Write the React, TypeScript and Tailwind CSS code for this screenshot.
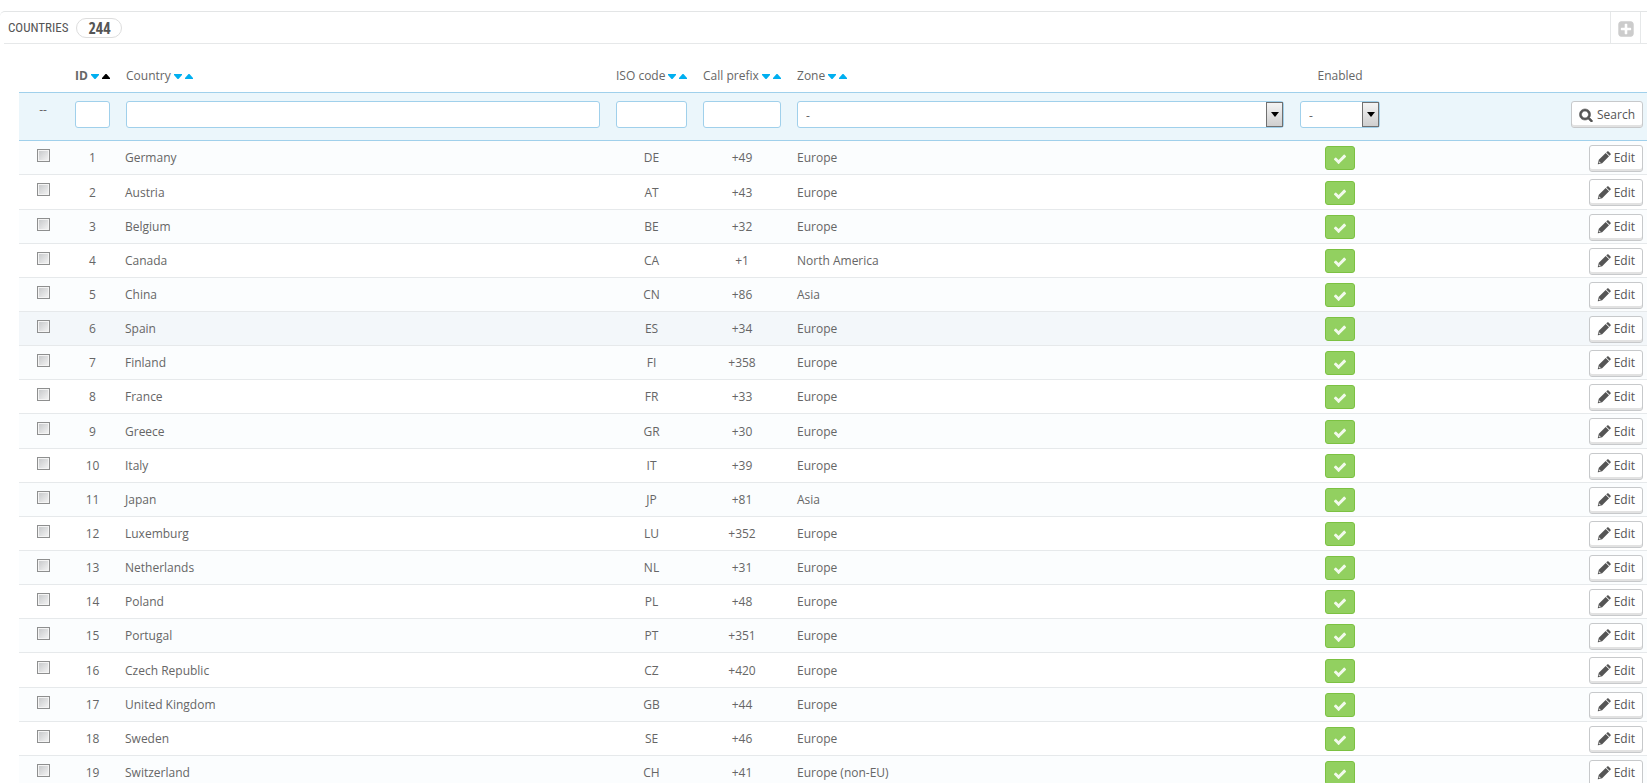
import React from "react";

const PATHS = {
  check:
    "M1671 566q0 40-28 68l-724 724-136 136q-28 28-68 28t-68-28l-136-136-362-362q-28-28-28-68t28-68l136-136q28-28 68-28t68 28l294 295 656-657q28-28 68-28t68 28l136 136q28 28 28 68z",
  pencil:
    "M400 1570l70-70-170-170-70 70v80h90v90h80zM1110 250l430 430-880 880-520 130q-50 10-40-40l130-520zM1760 400q0 55-38 92l-110 110-424-424 110-110q38-38 92-38t92 38l240 240q38 36 38 92z",
  search:
    "M1216 832q0-185-131.5-316.5t-316.5-131.5-316.5 131.5-131.5 316.5 131.5 316.5 316.5 131.5 316.5-131.5 131.5-316.5zm512 832q0 52-38 90t-90 38q-54 0-90-38l-343-342q-179 124-399 124-143 0-273.5-55.5t-225-150-150-225-55.5-273.5 55.5-273.5 150-225 225-150 273.5-55.5 273.5 55.5 225 150 150 225 55.5 273.5q0 220-124 399l343 343q37 37 37 90z",
  plusSquare:
    "M1408 960v-128q0-26-19-45t-45-19h-320v-320q0-26-19-45t-45-19h-128q-26 0-45 19t-19 45v320h-320q-26 0-45 19t-19 45v128q0 26 19 45t45 19h320v320q0 26 19 45t45 19h128q26 0 45-19t19-45v-320h320q26 0 45-19t19-45zm256-544v960q0 119-84.500 203.500t-203.500 84.500h-960q-119 0-203.500-84.500t-84.500-203.500v-960q0-119 84.500-203.500t203.500-84.500h960q119 0 203.500 84.500t84.500 203.500z",
};

function Icon({ name, className }: { name: keyof typeof PATHS; className: string }) {
  return (
    <svg viewBox="0 0 1792 1792" fill="currentColor" fillRule="evenodd" aria-hidden="true" className={className}>
      <path d={PATHS[name]} />
    </svg>
  );
}

type Country = [id: number, name: string, iso: string, prefix: string, zone: string];

const COUNTRIES: Country[] = [
  [1, "Germany", "DE", "+49", "Europe"],
  [2, "Austria", "AT", "+43", "Europe"],
  [3, "Belgium", "BE", "+32", "Europe"],
  [4, "Canada", "CA", "+1", "North America"],
  [5, "China", "CN", "+86", "Asia"],
  [6, "Spain", "ES", "+34", "Europe"],
  [7, "Finland", "FI", "+358", "Europe"],
  [8, "France", "FR", "+33", "Europe"],
  [9, "Greece", "GR", "+30", "Europe"],
  [10, "Italy", "IT", "+39", "Europe"],
  [11, "Japan", "JP", "+81", "Asia"],
  [12, "Luxemburg", "LU", "+352", "Europe"],
  [13, "Netherlands", "NL", "+31", "Europe"],
  [14, "Poland", "PL", "+48", "Europe"],
  [15, "Portugal", "PT", "+351", "Europe"],
  [16, "Czech Republic", "CZ", "+420", "Europe"],
  [17, "United Kingdom", "GB", "+44", "Europe"],
  [18, "Sweden", "SE", "+46", "Europe"],
  [19, "Switzerland", "CH", "+41", "Europe (non-EU)"],
];

function SortHeader({ label, active }: { label: string; active?: boolean }) {
  return (
    <div className={`flex items-center ${active ? "font-bold" : ""}`}>
      <span className="whitespace-nowrap">{label}</span>
      <a href="#desc" aria-label={`Sort ${label} descending`} className="ml-[3px] text-[#00aff0]">
        <svg viewBox="0 0 8 5" fill="currentColor" className="h-[5px] w-2">
          <path d="M0 0h8v1L4.5 5h-1L0 1z" />
        </svg>
      </a>
      <a
        href="#asc"
        aria-label={`Sort ${label} ascending`}
        className={`ml-[3px] ${active ? "text-black" : "text-[#00aff0]"}`}
      >
        <svg viewBox="0 0 8 5" fill="currentColor" className="h-[5px] w-2">
          <path d="M3.5 0h1L8 4v1H0V4z" />
        </svg>
      </a>
    </div>
  );
}

function TextFilter({ label }: { label: string }) {
  return (
    <input
      type="text"
      aria-label={label}
      className="block h-[27px] w-full rounded-[3px] border border-[#a0d0eb] bg-white px-2 outline-none"
    />
  );
}

function SelectFilter({ label }: { label: string }) {
  return (
    <div className="relative">
      <select
        aria-label={label}
        className="block h-[27px] w-full appearance-none rounded-[3px] border border-[#a0d0eb] bg-white pt-0.5 pl-2 outline-none"
      >
        <option>-</option>
      </select>
      <span className="pointer-events-none absolute inset-y-px right-px flex w-[17px] items-center justify-center border border-[#707070] bg-linear-to-b from-[#f4f4f4] to-[#cfcfcf]">
        <svg viewBox="0 0 8 5" fill="#000" className="h-[5px] w-2">
          <path d="M0 0h8L4 5z" />
        </svg>
      </span>
    </div>
  );
}

const BUTTON =
  "inline-flex h-[27px] items-center rounded-[3px] border border-[#c7c9cb] bg-white px-[7px] text-[#555] shadow-[inset_0_-2px_0_#e2e2e2]";

export default function App() {
  return (
    <main className="h-screen overflow-hidden bg-white pt-[11px] font-['Open_Sans','Noto_Sans',sans-serif] text-[12px] text-[#666]">
      <section className="rounded-tl-[5px] border-t border-[#e3e5e6]">
        <header className="ml-1 flex h-8 items-stretch border-b border-[#e6e8e9] font-['Ubuntu_Condensed','Liberation_Sans_Narrow','Roboto_Condensed',sans-serif] text-[#555]">
          <h1 className="flex flex-1 items-center gap-2 pl-1 text-[13px]">
            COUNTRIES
            <span className="flex h-5 w-[46px] items-center justify-center rounded-full border border-[#ddd] font-['Open_Sans_Condensed','Liberation_Sans_Narrow',sans-serif] text-[16px] font-bold">
              244
            </span>
          </h1>
          <button
            type="button"
            aria-label="Add new country"
            className="mr-[6px] flex w-[31px] items-center justify-center border-x border-[#e6e8e9] pt-0.5 text-[#ccc]"
          >
            <Icon name="plusSquare" className="size-[18px]" />
          </button>
        </header>

        <div className="pt-4 pl-[19px]">
          <table className="w-full table-fixed border-separate border-spacing-0">
            <colgroup>
              <col className="w-12" />
              <col className="w-[51px]" />
              <col className="w-[30.1%]" />
              <col className="w-[87px]" />
              <col className="w-[94px]" />
              <col className="w-[30.9%]" />
              <col className="w-24" />
              <col />
            </colgroup>
            <thead>
              <tr className="h-[33px] text-left *:border-b *:border-[#a0d0eb] *:px-2 *:font-normal">
                <td />
                <th scope="col"><SortHeader label="ID" active /></th>
                <th scope="col"><SortHeader label="Country" /></th>
                <th scope="col"><SortHeader label="ISO code" /></th>
                <th scope="col"><SortHeader label="Call prefix" /></th>
                <th scope="col"><SortHeader label="Zone" /></th>
                <th scope="col" className="text-center">Enabled</th>
                <td />
              </tr>
              <tr className="h-12 bg-[#ebf6fb] *:border-b *:border-[#a0d0eb] *:px-2 *:pt-2 *:align-top">
                <td className="text-center">--</td>
                <td><TextFilter label="Filter by ID" /></td>
                <td><TextFilter label="Filter by country" /></td>
                <td><TextFilter label="Filter by ISO code" /></td>
                <td><TextFilter label="Filter by call prefix" /></td>
                <td><SelectFilter label="Filter by zone" /></td>
                <td><SelectFilter label="Filter by enabled" /></td>
                <td>
                  <div className="-mr-1 flex justify-end">
                    <button type="button" className={BUTTON}>
                      <Icon name="search" className="mr-1 size-[14px] stroke-current stroke-[80px]" />
                      Search
                    </button>
                  </div>
                </td>
              </tr>
            </thead>
            <tbody>
              {COUNTRIES.map(([id, name, iso, prefix, zone]) => (
                <tr
                  key={id}
                  className={`h-[34px] nth-[7n+2]:h-[35px] *:border-b *:border-[#e6e9eb] *:px-2 *:pt-px ${
                    id === 6 ? "bg-[#f3f7fa]" : "odd:bg-[#fbfdfe]"
                  }`}
                >
                  <td className="align-top">
                    <input
                      type="checkbox"
                      aria-label={`Select ${name}`}
                      className="mx-auto mt-[7px] block size-[13px] appearance-none border border-[#8e8f8f] bg-linear-to-br from-[#c4c6c8] to-[#f6f6f6] shadow-[inset_0_0_0_1px_#f4f4f4]"
                    />
                  </td>
                  <td className="text-center">{id}</td>
                  <td className="pl-[7px]!">{name}</td>
                  <td className="text-center">{iso}</td>
                  <td className="text-center">{prefix}</td>
                  <td>{zone}</td>
                  <td>
                    <button
                      type="button"
                      aria-label={`${name} enabled`}
                      className="mx-auto flex h-6 w-[30px] items-center justify-center rounded-[3px] border border-[#7cc142] bg-[#92d060] pt-0.5 text-[#f2faec]"
                    >
                      <Icon name="check" className="size-[14px]" />
                    </button>
                  </td>
                  <td>
                    <div className="-mr-1 flex justify-end">
                      <button type="button" className={BUTTON}>
                        <Icon name="pencil" className="mr-[3px] size-[14px]" />
                        Edit
                      </button>
                    </div>
                  </td>
                </tr>
              ))}
            </tbody>
          </table>
        </div>
      </section>
    </main>
  );
}
